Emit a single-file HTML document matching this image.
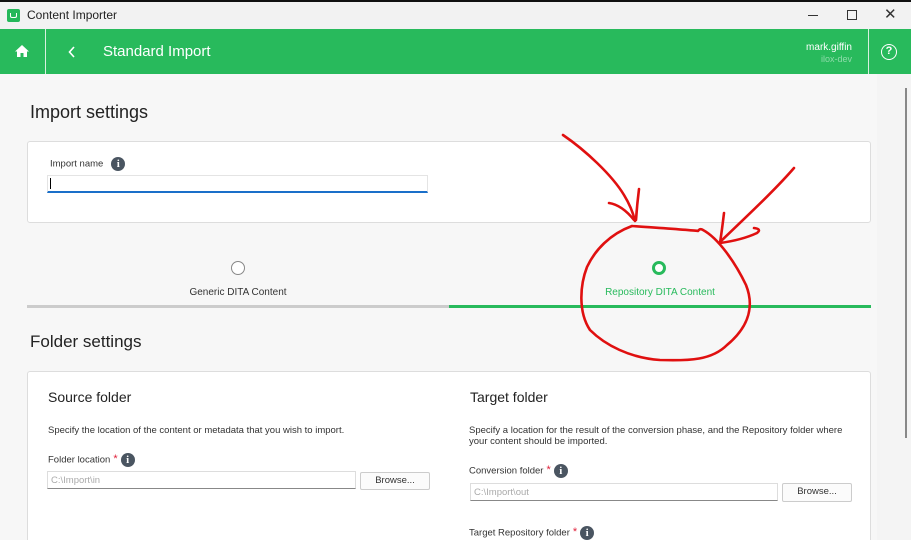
<!DOCTYPE html>
<html><head><meta charset="utf-8"><style>
*{margin:0;padding:0;box-sizing:border-box}
html,body{width:911px;height:540px;overflow:hidden}
body{position:relative;background:#f7f7f7;font-family:"Liberation Sans",Arial,sans-serif;color:#333}
.abs{position:absolute}
.info{display:inline-block;vertical-align:middle;margin-left:5px;width:14px;height:14px;border-radius:50%;background:#4a5561;color:#fff;font:bold 11px "Liberation Serif",serif;text-align:center;line-height:14px}
.star{color:#e0203a;font-size:11px;vertical-align:top;margin-left:3px}
.inp{position:absolute;background:#fff;border:1px solid #ddd;border-bottom:1px solid #888;font-size:9.5px;color:#aaa;padding:3px 3px}
.btn{position:absolute;background:#fbfbfb;border:1px solid #ccc;border-radius:2px;font-size:9.5px;color:#333;text-align:center;line-height:16px}
.lbl{position:absolute;font-size:9.5px;color:#333;white-space:nowrap}
</style></head><body>
<div class="abs" style="left:0;top:0;width:911px;height:2px;background:#111"></div>
<div class="abs" style="left:0;top:2px;width:911px;height:27px;background:#f2f2f2"></div>
<div class="abs" style="left:7px;top:9px;width:13px;height:13px;background:#25b85a;border-radius:2px"></div>
<div class="abs" style="left:10px;top:13px;width:7px;height:5px;border:1.5px solid #fff;border-top:none;border-radius:0 0 2px 2px"></div>
<div class="abs" style="left:27px;top:8px;font-size:12px;color:#222">Content Importer</div>
<div class="abs" style="left:808px;top:15px;width:10px;height:1px;background:#333"></div>
<div class="abs" style="left:847px;top:10px;width:10px;height:10px;border:1px solid #333"></div>
<div class="abs" style="left:884px;top:5px;font-size:15px;color:#333">✕</div>
<div class="abs" style="left:0;top:29px;width:911px;height:45px;background:#28ba5c"></div>
<div class="abs" style="left:45px;top:29px;width:1px;height:45px;background:#d8f0df"></div>
<div class="abs" style="left:868px;top:29px;width:1px;height:45px;background:#d8f0df"></div>
<svg class="abs" style="left:14px;top:44px" width="16" height="14" viewBox="0 0 16 14"><path d="M8 1L1 7.5h2V13h3.5V9h3v4H13V7.5h2z" fill="#fff"/></svg>
<svg class="abs" style="left:68px;top:46px" width="8" height="12"><path d="M6 1L1.5 6 6 11" stroke="#fff" stroke-width="1.6" fill="none"/></svg>
<div class="abs" style="left:103px;top:43px;font-size:15px;color:#fff">Standard Import</div>
<div class="abs" style="left:780px;top:42px;width:72px;text-align:right;font-size:10px;color:#fff">mark.giffin</div>
<div class="abs" style="left:780px;top:54px;width:72px;text-align:right;font-size:9px;color:#8fdcab">ilox-dev</div>
<div class="abs" style="left:881px;top:44px;width:16px;height:16px;border:1.5px solid #fff;border-radius:50%;color:#fff;font-size:11px;font-weight:bold;text-align:center;line-height:13px">?</div>
<div class="abs" style="left:877px;top:74px;width:34px;height:466px;background:#f4f4f4"></div>
<div class="abs" style="left:905px;top:88px;width:2px;height:350px;background:#888"></div>
<div class="abs" style="left:30px;top:102px;font-size:18px;color:#222">Import settings</div>
<div class="abs" style="left:27px;top:141px;width:844px;height:82px;background:#fff;border:1px solid #ddd;border-radius:3px"></div>
<div class="lbl" style="left:50px;top:157px">Import name<span class="info" style="margin-left:8px">i</span></div>
<div class="abs" style="left:47px;top:175px;width:381px;height:18px;background:#fff;border:1px solid #e4e4e4;border-bottom:2px solid #1a6fc9"></div>
<div class="abs" style="left:50px;top:178px;width:1px;height:11px;background:#000"></div>
<div class="abs" style="left:231px;top:261px;width:14px;height:14px;border:1px solid #888;border-radius:50%;background:#fff"></div>
<div class="abs" style="left:138px;top:287px;width:200px;text-align:center;font-size:10px;color:#333">Generic DITA Content</div>
<div class="abs" style="left:652px;top:261px;width:14px;height:14px;border:3.5px solid #28ba5c;border-radius:50%;background:#fff"></div>
<div class="abs" style="left:560px;top:287px;width:200px;text-align:center;font-size:10px;color:#28ba5c">Repository DITA Content</div>
<div class="abs" style="left:27px;top:305px;width:422px;height:3px;background:#ccc"></div>
<div class="abs" style="left:449px;top:305px;width:422px;height:3px;background:#28ba5c"></div>
<div class="abs" style="left:30px;top:332px;font-size:17px;color:#222">Folder settings</div>
<div class="abs" style="left:27px;top:371px;width:844px;height:180px;background:#fff;border:1px solid #ddd;border-radius:3px"></div>
<div class="abs" style="left:48px;top:389px;font-size:14px;color:#222">Source folder</div>
<div class="lbl" style="left:48px;top:425px">Specify the location of the content or metadata that you wish to import.</div>
<div class="lbl" style="left:48px;top:453px">Folder location<span class="star">*</span><span class="info" style="margin-left:3px">i</span></div>
<div class="inp" style="left:47px;top:471px;width:309px;height:18px">C:\Import\in</div>
<div class="btn" style="left:360px;top:472px;width:70px;height:18px">Browse...</div>
<div class="abs" style="left:470px;top:389px;font-size:14px;color:#222">Target folder</div>
<div class="lbl" style="left:469px;top:425px;line-height:11px">Specify a location for the result of the conversion phase, and the Repository folder where<br>your content should be imported.</div>
<div class="lbl" style="left:469px;top:464px">Conversion folder<span class="star">*</span><span class="info" style="margin-left:3px">i</span></div>
<div class="inp" style="left:470px;top:483px;width:308px;height:18px">C:\Import\out</div>
<div class="btn" style="left:782px;top:483px;width:70px;height:19px">Browse...</div>
<div class="lbl" style="left:469px;top:526px">Target Repository folder<span class="star">*</span><span class="info" style="margin-left:3px">i</span></div>
<svg class="abs" style="left:0;top:0" width="911" height="540" fill="none" stroke="#e01010" stroke-width="2.6" stroke-linecap="round" stroke-linejoin="round">
<path d="M563 135C585 150 612 175 624 195Q632 208 635 221"/>
<path d="M609 203Q622 205 634 220"/>
<path d="M639 189Q637 205 636 220"/>
<path d="M794 168C775 190 748 215 720 242"/>
<path d="M724 213Q722 230 720 243Q742 240 757 233Q762 229 754 228"/>
<path d="M632 226C660 228 690 230 698 231Q700 228 703 230C718 238 735 262 746 285C756 310 745 330 727 345C712 360 690 361 660 360C630 358 605 345 590 330C578 312 580 285 587 267C595 250 610 234 632 226"/>
</svg>
</body></html>
